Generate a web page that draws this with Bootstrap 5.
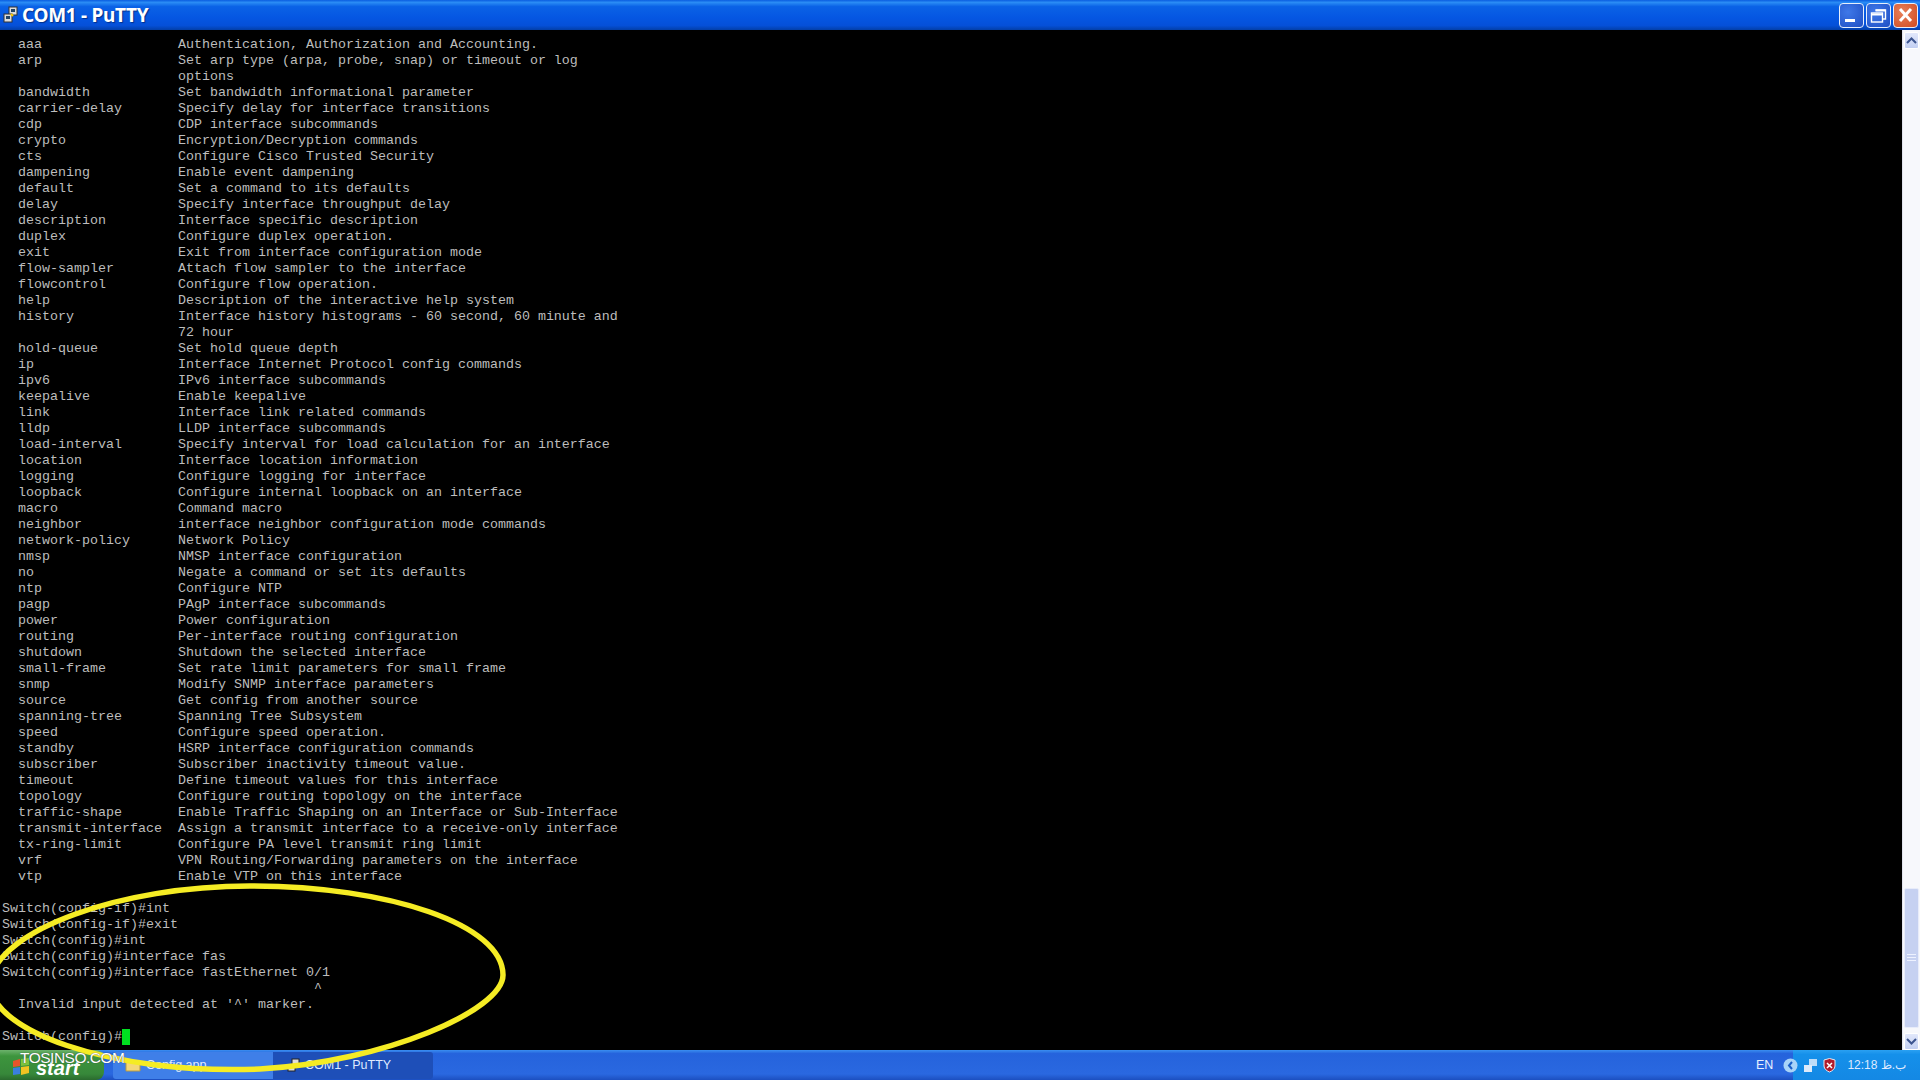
<!DOCTYPE html>
<html lang="en">
<head>
<meta charset="utf-8">
<title>COM1 - PuTTY</title>
<link rel="stylesheet" href="https://cdn.jsdelivr.net/npm/bootstrap@5.3.0/dist/css/bootstrap.min.css">
<style>
html,body{height:100%;margin:0;overflow:hidden;background:#000}
.xp-screen{height:1080px;position:relative;overflow:hidden}
.xp-title{height:30px;background:linear-gradient(180deg,#0a5de0 0,#2a8cf5 8%,#0a62e6 22%,#0556e2 60%,#0550d8 85%,#033fa8 100%);color:#fff;font:700 19px/1 "Noto Sans",sans-serif;letter-spacing:-.3px;padding-left:3px}
.xp-title-text{text-shadow:1px 1px 1px #02308a;margin-left:3px}
.win-btn{width:25px;height:25px;border:1px solid #e6eefc;border-radius:4px;background:radial-gradient(circle at 35% 35%,#3f78e8,#1f4fc4);display:block;flex:none}
.win-btn.closer{background:radial-gradient(circle at 35% 35%,#e8805a,#cf4a20)}
.win-btns{gap:2px;margin-right:2px}
.term-area{height:1020px;background:#000}
.term{flex:1;margin:0;padding:7px 0 0 2px;font:13.333px/16px "Liberation Mono","Courier New",monospace;color:#bdbdbd;overflow:hidden;white-space:pre}
.cursor-block{display:inline-block;width:8px;height:16px;background:#00e020;vertical-align:top}
.scroll-track{width:18px;background:#f7f8fc;padding:2px 1px 0 1px;border-left:1px solid #e2e4ee}
.scroll-arrow{height:17px;background:linear-gradient(180deg,#e2e8fb,#c2cff2);border:1px solid #fff;border-radius:2px;flex:none}
.scroll-thumb{height:140px;background:#c6d1f1;border:1px solid #e8ecfa;border-radius:2px;margin-top:auto;margin-bottom:5px;flex:none}
.taskbar{height:30px;background:linear-gradient(180deg,#3a8ef0 0,#2563dc 12%,#2a68e0 80%,#1c4fc0 100%);color:#dfeaff;font:12px/1 "Liberation Sans",sans-serif}
.start-btn{width:104px;height:30px;background:linear-gradient(180deg,#6cb26c 0,#3d953d 20%,#37883a 80%,#2a6a2e 100%);border-radius:0 8px 8px 0;color:#fff;font:italic 700 20px/1 "Liberation Sans",sans-serif;padding-left:36px;padding-top:8px;flex:none}
.task-item{width:160px;height:27px;flex:none;font-size:12.5px;gap:5px}
.task-one{background:#3f7fe8;margin-left:9px;border-radius:3px 0 0 3px;padding-left:12px}
.task-two{background:#1e4fb8;border-radius:0 3px 3px 0;padding-left:14px}
.tray{width:127px;height:30px;margin-left:auto;background:linear-gradient(180deg,#2aa0f2 0,#1590ea 15%,#1488e4 100%);font-size:12.5px;gap:5px}
.lang-tag{margin-left:-37px;margin-right:5px;color:#e6f0ff}
.clock-text{margin-left:6px;white-space:nowrap;font-size:12px}
.oval-mark{position:absolute;left:0;top:880px;pointer-events:none}
.mark-text{position:absolute;left:20px;top:1048px;color:#fff;font:15.5px/20px "Liberation Sans",sans-serif;letter-spacing:-.5px;text-shadow:0 0 1px #333}
.logo-mark{position:absolute;left:11px;top:1058px}
</style>
</head>
<body>
<div class="xp-screen d-flex flex-column">
  <div class="xp-title d-flex align-items-center">
    <svg width="16" height="18" viewBox="0 0 16 18"><rect x="6" y="1" width="8" height="8" fill="#ddd" stroke="#333"/><rect x="8" y="3" width="4" height="3" fill="#246"/><rect x="1" y="8" width="8" height="8" fill="#ddd" stroke="#333"/><rect x="3" y="10" width="4" height="3" fill="#246"/><path d="M8 8l2 2" stroke="#fc0" stroke-width="2"/></svg>
    <span class="xp-title-text">COM1 - PuTTY</span>
    <div class="ms-auto d-flex win-btns">
      <span class="win-btn"><svg width="23" height="23" viewBox="0 0 23 23"><rect x="5" y="15" width="10" height="3" fill="#fff"/></svg></span>
      <span class="win-btn"><svg width="23" height="23" viewBox="0 0 23 23" fill="none" stroke="#fff" stroke-width="1.4"><rect x="4.500" y="9" width="11" height="9"/><path d="M4.500 10.500h11" stroke-width="2"/><path d="M8.500 6h10v9h-3"/><path d="M8.500 6.500h10" stroke-width="2"/></svg></span>
      <span class="win-btn closer"><svg width="23" height="23" viewBox="0 0 23 23" stroke="#fff" stroke-width="3"><path d="M6 5l11 12M17 5L6 17"/></svg></span>
    </div>
  </div>
  <div class="term-area d-flex">
<pre class="term">  aaa                 Authentication, Authorization and Accounting.
  arp                 Set arp type (arpa, probe, snap) or timeout or log
                      options
  bandwidth           Set bandwidth informational parameter
  carrier-delay       Specify delay for interface transitions
  cdp                 CDP interface subcommands
  crypto              Encryption/Decryption commands
  cts                 Configure Cisco Trusted Security
  dampening           Enable event dampening
  default             Set a command to its defaults
  delay               Specify interface throughput delay
  description         Interface specific description
  duplex              Configure duplex operation.
  exit                Exit from interface configuration mode
  flow-sampler        Attach flow sampler to the interface
  flowcontrol         Configure flow operation.
  help                Description of the interactive help system
  history             Interface history histograms - 60 second, 60 minute and
                      72 hour
  hold-queue          Set hold queue depth
  ip                  Interface Internet Protocol config commands
  ipv6                IPv6 interface subcommands
  keepalive           Enable keepalive
  link                Interface link related commands
  lldp                LLDP interface subcommands
  load-interval       Specify interval for load calculation for an interface
  location            Interface location information
  logging             Configure logging for interface
  loopback            Configure internal loopback on an interface
  macro               Command macro
  neighbor            interface neighbor configuration mode commands
  network-policy      Network Policy
  nmsp                NMSP interface configuration
  no                  Negate a command or set its defaults
  ntp                 Configure NTP
  pagp                PAgP interface subcommands
  power               Power configuration
  routing             Per-interface routing configuration
  shutdown            Shutdown the selected interface
  small-frame         Set rate limit parameters for small frame
  snmp                Modify SNMP interface parameters
  source              Get config from another source
  spanning-tree       Spanning Tree Subsystem
  speed               Configure speed operation.
  standby             HSRP interface configuration commands
  subscriber          Subscriber inactivity timeout value.
  timeout             Define timeout values for this interface
  topology            Configure routing topology on the interface
  traffic-shape       Enable Traffic Shaping on an Interface or Sub-Interface
  transmit-interface  Assign a transmit interface to a receive-only interface
  tx-ring-limit       Configure PA level transmit ring limit
  vrf                 VPN Routing/Forwarding parameters on the interface
  vtp                 Enable VTP on this interface

Switch(config-if)#int
Switch(config-if)#exit
Switch(config)#int
Switch(config)#interface fas
Switch(config)#interface fastEthernet 0/1
                                       ^
  Invalid input detected at '^' marker.

Switch(config)#<span class="cursor-block"></span></pre>
    <div class="scroll-track d-flex flex-column">
      <div class="scroll-arrow d-flex align-items-center justify-content-center"><svg width="11" height="7" viewBox="0 0 11 7" fill="none" stroke="#3c5590" stroke-width="2"><path d="M1 6l4.500-4.500L10 6"/></svg></div>
      <div class="scroll-thumb d-flex align-items-center justify-content-center"><svg width="9" height="8" viewBox="0 0 9 8" stroke="#eef2ff"><path d="M0 .5h9M0 3.500h9M0 6.500h9"/></svg></div>
      <div class="scroll-arrow d-flex align-items-center justify-content-center"><svg width="11" height="7" viewBox="0 0 11 7" fill="none" stroke="#3c5590" stroke-width="2"><path d="M1 1l4.500 4.500L10 1"/></svg></div>
    </div>
  </div>
  <div class="taskbar d-flex align-items-center">
    <div class="start-btn">start</div>
    <div class="task-item task-one d-flex align-items-center"><svg width="16" height="14" viewBox="0 0 16 14"><path d="M1 3h5l1 2h8v8H1z" fill="#f4d878" stroke="#b89a40"/></svg><span>Config.app</span></div>
    <div class="task-item task-two d-flex align-items-center"><svg width="13" height="14" viewBox="0 0 13 14"><rect x="5" y="1" width="7" height="6" fill="#ddd" stroke="#222"/><rect x="1" y="7" width="7" height="6" fill="#ddd" stroke="#222"/></svg><span>COM1 - PuTTY</span></div>
    <div class="tray d-flex align-items-center">
      <span class="lang-tag">EN</span>
      <svg width="15" height="15" viewBox="0 0 15 15"><circle cx="7.500" cy="7.500" r="7" fill="#a8d4f8"/><path d="M9 4L6 7.500 9 11" stroke="#1a5fc8" stroke-width="2" fill="none"/></svg>
      <svg width="15" height="15" viewBox="0 0 15 15"><rect x="6" y="1" width="8" height="7" fill="#bcdcf8"/><rect x="1" y="7" width="8" height="7" fill="#dceafa"/></svg>
      <svg width="13" height="15" viewBox="0 0 13 15"><path d="M1 2l5.500-1.500L12 2v6c0 3-3 5-5.500 6C4 13 1 11 1 8z" fill="#b01c2c" stroke="#e8e8f0"/><path d="M4 5l5 5M9 5l-5 5" stroke="#fff" stroke-width="1.500"/></svg>
      <span class="clock-text">12:18 ب.ظ</span>
    </div>
  </div>
  <svg class="oval-mark" width="520" height="200" viewBox="0 0 520 200" fill="none"><path d="M-10 100C0 50 120 6 250 6 390 6 503 45 503 95 503 130 385 182 260 189 110 195-15 150-10 100Z" stroke="#f5ec24" stroke-width="5.500"/></svg>
  <svg class="logo-mark" width="20" height="18" viewBox="0 0 20 18"><path d="M2 3l7-2v7l-7 1z" fill="#e8542a"/><path d="M10 1l8-1v7l-8 1z" fill="#7cc23c"/><path d="M2 10l7-1v7l-7 1z" fill="#3a7fe0"/><path d="M10 9l8-1v7l-8 2z" fill="#f2c322"/></svg>
  <div class="mark-text">TOSINSO.COM</div>
</div>
</body>
</html>
